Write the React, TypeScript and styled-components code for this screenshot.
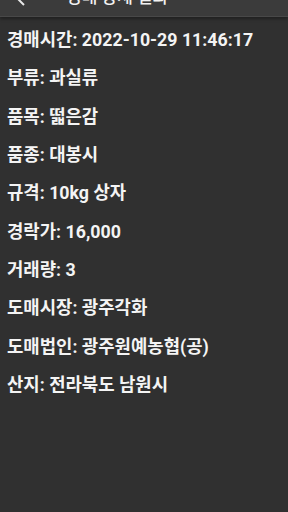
import React from "react";
import styled, { createGlobalStyle } from "styled-components";

const Global = createGlobalStyle`
  html, body { margin: 0; padding: 0; background: #303030; }
  body { font-family: Roboto, "Noto Sans CJK KR", sans-serif; }
`;

const Screen = styled.div`
  width: 288px;
  height: 512px;
  background: #303030;
  overflow: hidden;
  display: flex;
  flex-direction: column;
`;

const Toolbar = styled.div`
  height: 16px;
  flex: none;
  background: #3b3b3b;
  border-bottom: 1px solid #484848;
  box-shadow: 0 2px 3px rgba(0, 0, 0, 0.35);
  display: flex;
  align-items: flex-end;
  overflow: hidden;
  position: relative;
  z-index: 1;
`;

const BackIcon = styled.svg`
  flex: none;
  margin-left: 16px;
  margin-bottom: 10px;
`;

const Title = styled.div`
  margin-left: 40px;
  margin-bottom: 9px;
  font-size: 17px;
  font-weight: 500;
  line-height: 20px;
  color: #f2f2f2;
  white-space: nowrap;
`;

const List = styled.div`
  display: flex;
  flex-direction: column;
  padding: 2px 0 0 7px;
`;

const Row = styled.div`
  height: 38.3px;
  display: flex;
  align-items: center;
  font-size: 17.8px;
  font-weight: 700;
  color: #f4f4f4;
  white-space: nowrap;
`;

const rows = [
  "경매시간: 2022-10-29 11:46:17",
  "부류: 과실류",
  "품목: 떫은감",
  "품종: 대봉시",
  "규격: 10kg 상자",
  "경락가: 16,000",
  "거래량: 3",
  "도매시장: 광주각화",
  "도매법인: 광주원예농협(공)",
  "산지: 전라북도 남원시",
];

export default function App() {
  return (
    <Screen>
      <Global />
      <Toolbar>
        <BackIcon width="10" height="14" viewBox="0 0 10 14">
          <path d="M8 1 L2 7 L8 13" stroke="#e8e8e8" strokeWidth="2" fill="none" />
        </BackIcon>
        <Title>경매 상세 결과</Title>
      </Toolbar>
      <List>
        {rows.map((r) => (
          <Row key={r}>{r}</Row>
        ))}
      </List>
    </Screen>
  );
}
